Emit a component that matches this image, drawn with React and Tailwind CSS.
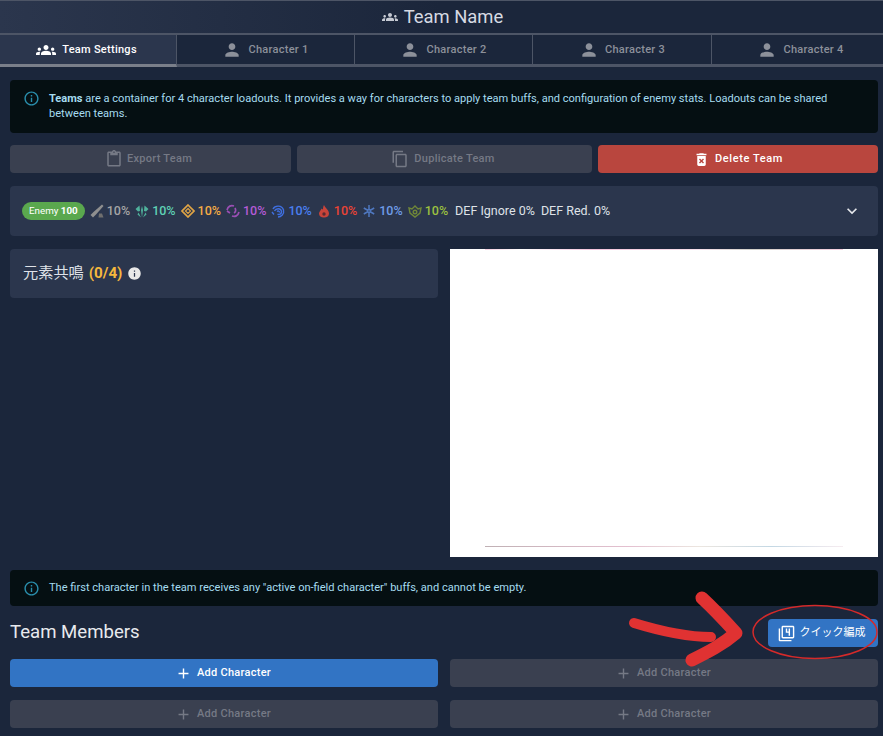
import React from "react";
import {
  MdGroups, MdPerson, MdOutlineContentPaste, MdOutlineContentCopy, MdDeleteForever,
  MdInfoOutline, MdInfo, MdAdd, MdKeyboardArrowDown, MdOutlineFilter4,
} from "react-icons/md";

const font = "font-['Roboto','Noto_Sans_CJK_JP',sans-serif]";

function Tab({ active, icon, label, border }) {
  return (
    <div className={`flex items-center justify-center gap-[6px] h-[34px] pt-px border-t-2 border-t-[#4d5566] border-b-[3px] text-[11px] font-medium tracking-[0.28px] ${border} ${active ? "text-white bg-[#2b364d] border-b-[#7a7f8a]" : "text-[#8c909a] border-b-[#4d5566]"}`}>
      {icon}
      <span>{label}</span>
    </div>
  );
}

function Alert({ children, className, textClass }) {
  return (
    <div className={`flex gap-[9px] rounded bg-[#050f12] pl-[13px] pr-[14px] text-[11.07px] leading-[15px] text-[#a6dcf0] ${className}`}>
      <MdInfoOutline className="shrink-0 text-[#2a8fad] text-[17px] mt-[10px]" />
      <div className={textClass}>{children}</div>
    </div>
  );
}

function DisabledButton({ className, icon, label }) {
  return (
    <div className={`flex items-center justify-center rounded bg-[#3a4050] text-[#757985] text-[11px] font-medium tracking-[0.28px] ${className}`}>
      {icon}
      <span>{label}</span>
    </div>
  );
}

const P = {
  physical: (
    <svg viewBox="0 0 14 14" className="w-[14px] h-[14px]"><path d="M12 0.5 L13.5 2 L6 10.5 L3 13.5 L0.5 11 L3.5 8 Z" fill="#8f8f8f" /><path d="M9 9.5h3l1.5 4H8.5z" fill="#6f6f6f" /></svg>
  ),
  anemo: (
    <svg viewBox="0 0 14 14" className="w-[14px] h-[14px]"><path d="M0.5 5 L4.5 1.5 L5 7 L3 7.5Z M13.5 5 L9.5 1.5 L9 7 L11 7.5Z M7 2 L8 6 L7 13.5 L6 6Z M3.5 8.5 L6 13.5 L2.5 10.5Z M10.5 8.5 L8 13.5 L11.5 10.5Z" fill="#4fb29c" /></svg>
  ),
  geo: (
    <svg viewBox="0 0 14 14" className="w-[14px] h-[14px]" fill="none" stroke="#e0a445" strokeWidth="1.7"><path d="M7 1 L13 7 L7 13 L1 7Z" /><path d="M7 4.5 L9.5 7 L7 9.5 L4.5 7Z" strokeWidth="1.2" /></svg>
  ),
  electro: (
    <svg viewBox="0 0 14 14" className="w-[14px] h-[14px]" fill="none" stroke="#9a4fb4" strokeWidth="1.7"><path d="M1 6 C2 2 5 1 8 2 M13 8 C12 12 9 13 6 12 M9 4 C10 6 10 8 8 9 M1 7 L4 9" /></svg>
  ),
  hydro: (
    <svg viewBox="0 0 14 14" className="w-[14px] h-[14px]" fill="none" stroke="#3f6fe0" strokeWidth="1.4"><path d="M2 5 C4 1 11 1 12.5 6 C13.5 10 10 13 7 13 M3.5 7 C5 4 10 4 10.5 7.5 C10.8 10 8 11 6.5 10 M6 7.5 C7 6.5 8.5 7 8.5 8.5 M1 8 L3 10.5" /></svg>
  ),
  pyro: (
    <svg viewBox="0 0 14 14" className="w-[14px] h-[14px]"><path d="M7 1 C8 4 12 6 12 9.5 C12 12 10 13.5 7 13.5 C4 13.5 2 12 2 9.5 C2 7.5 4 6.5 4.5 4.5 C5.5 5.5 6 5.5 6 5 C6 3.5 6.5 2 7 1Z" fill="#c8443a" /><circle cx="7" cy="10" r="1.7" fill="#5a2a30" /></svg>
  ),
  cryo: (
    <svg viewBox="0 0 14 14" className="w-[14px] h-[14px]" fill="none" stroke="#4f78c0" strokeWidth="1.5"><path d="M7 1V13M1.8 4L12.2 10M12.2 4L1.8 10" /><circle cx="7" cy="7" r="1.4" fill="#2b364d" /></svg>
  ),
  dendro: (
    <svg viewBox="0 0 14 14" className="w-[14px] h-[14px]" fill="none" stroke="#6f8638" strokeWidth="1.4"><path d="M1 4 L4 5 L7 2 L10 5 L13 4 L12 9 L7 13 L2 9Z" /><circle cx="7" cy="8" r="1.8" /></svg>
  ),
};

function Res({ icon, color }) {
  return (
    <span className="flex items-center gap-[3px]">
      {icon}
      <span className={`font-medium ${color}`}>10%</span>
    </span>
  );
}

export default function App() {
  return (
    <div className={`relative w-[883px] h-[736px] overflow-hidden bg-[#1b263b] text-white ${font}`}>
      {/* Title */}
      <div className="flex items-center justify-center gap-[6px] h-[33px] pb-[1px] pl-[2px] border-t border-t-[#4d5566] bg-[linear-gradient(90deg,#2b364d_0%,#1b263b_50%)] text-[18.4px] text-[#d6dae3]">
        <MdGroups className="text-[16px] text-[#c6cad3]" />
        <span>Team Name</span>
      </div>

      {/* Tabs */}
      <div className="grid grid-cols-[177px_178px_178px_179px_1fr]">
        <Tab active border="border-r border-r-[#4d5566] pr-[3px]" icon={<MdGroups className="text-[20px]" />} label="Team Settings" />
        <Tab border="border-r border-r-[#4d5566]" icon={<MdPerson className="text-[20px]" />} label="Character 1" />
        <Tab border="border-r border-r-[#4d5566]" icon={<MdPerson className="text-[20px]" />} label="Character 2" />
        <Tab border="border-r border-r-[#4d5566]" icon={<MdPerson className="text-[20px]" />} label="Character 3" />
        <Tab border="pl-[6px]" icon={<MdPerson className="text-[20px]" />} label="Character 4" />
      </div>

      {/* Body */}
      <div className="flex flex-col gap-[13px] pl-[10px] pr-[5px] pt-[13px]">
        <Alert className="h-[53px] -mb-px" textClass="pt-[11px]">
          <p><b className="font-bold">Teams</b> are a container for 4 character loadouts. It provides a way for characters to apply team buffs, and configuration of enemy stats. Loadouts can be shared between teams.</p>
        </Alert>

        <div className="flex gap-[6px] h-[28px]">
          <DisabledButton className="w-[281px] gap-[4px] pr-[4px]" icon={<MdOutlineContentPaste className="text-[18px]" />} label="Export Team" />
          <DisabledButton className="w-[295px] gap-[5px] pr-[3px]" icon={<MdOutlineContentCopy className="text-[18px]" />} label="Duplicate Team" />
          <div className="flex flex-1 items-center justify-center gap-[5px] rounded bg-[#b9463e] text-[11px] font-medium tracking-[0.6px]">
            <MdDeleteForever className="text-[17px]" />
            <span>Delete Team</span>
          </div>
        </div>

        <div className="flex items-center h-[50px] rounded bg-[#2b364d] px-[12px] text-[12.5px]">
          <div className="flex items-center gap-[5px]">
            <span className="flex items-center h-[18px] rounded-full bg-[#5aa84e] px-[7px] text-[9.8px]">Enemy&nbsp;<b className="font-bold">100</b></span>
            <Res icon={P.physical} color="text-[#a5a5a5]" />
            <Res icon={P.anemo} color="text-[#5fd1b5]" />
            <Res icon={P.geo} color="text-[#f4ab45]" />
            <Res icon={P.electro} color="text-[#b45bd6]" />
            <Res icon={P.hydro} color="text-[#4a7ff0]" />
            <Res icon={P.pyro} color="text-[#ea4335]" />
            <Res icon={P.cryo} color="text-[#6f9ce8]" />
            <Res icon={P.dendro} color="text-[#9bc040]" />
            <span className="ml-[2px] text-[#dfe2e8]">DEF Ignore 0%</span>
            <span className="ml-px text-[#dfe2e8]">DEF Red. 0%</span>
          </div>
          <MdKeyboardArrowDown className="ml-auto mr-[4px] text-[20px] text-[#e6e8ec]" />
        </div>

        <div className="grid grid-cols-2 gap-[12px] h-[308px]">
          <div className="flex items-center gap-[5px] self-start h-[49px] rounded bg-[#2b364d] px-[13px] text-[15.2px] text-[#dfe2e8]">
            <span>元素共鳴</span>
            <span className="font-bold text-[#f5b83d]">(0/4)</span>
            <MdInfo className="text-[15px] text-[#e8e8e8]" />
          </div>
          <div className="flex flex-col bg-white pb-[10px]">
            <div className="mx-[35px] h-px bg-[linear-gradient(90deg,#f6d0e0,#ffffff_10%,#f4c4dc_30%,#f6e0ea_60%,#d0d0c8_75%,#f6d0e0)]" />
            <div className="flex-1" />
            <div className="mx-[35px] h-px bg-[linear-gradient(90deg,#c0b0b4,#e4c0d0_40%,#ece6e0_60%,#c4d8e4_80%,#f6ecf0)]" />
          </div>
        </div>

        <Alert className="h-[36px]" textClass="pt-[10px]">
          <p>The first character in the team receives any "active on-field character" buffs, and cannot be empty.</p>
        </Alert>

        <div className="flex items-center justify-between h-[28px]">
          <span className="text-[18.6px] text-[#e8eaee]">Team Members</span>
          <div className="flex items-center justify-center gap-[5px] w-[110px] h-[28px] pr-[3px] rounded-sm bg-[#3274c4] text-[11px]">
            <MdOutlineFilter4 className="text-[17px]" />
            <span>クイック編成</span>
          </div>
        </div>

        <div className="grid grid-cols-2 gap-x-[12px] gap-y-[13px] -mt-px">
          <div className="flex items-center justify-center gap-[5px] h-[28px] pr-[2px] rounded-sm bg-[#3274c4] text-[11px] font-medium tracking-[0.28px]">
            <MdAdd className="text-[17px]" />
            <span>Add Character</span>
          </div>
          <DisabledButton className="h-[28px] gap-[5px] pr-[2px]" icon={<MdAdd className="text-[17px]" />} label="Add Character" />
          <DisabledButton className="h-[28px] gap-[5px] pr-[2px]" icon={<MdAdd className="text-[17px]" />} label="Add Character" />
          <DisabledButton className="h-[28px] gap-[5px] pr-[2px]" icon={<MdAdd className="text-[17px]" />} label="Add Character" />
        </div>
      </div>

      {/* Hand-drawn annotation on top of the screenshot */}
      <svg className="absolute left-0 top-0 pointer-events-none" width="883" height="736" viewBox="0 0 883 736" fill="none">
        <path d="M634 623 C660 631 685 637 711 637" stroke="#e03232" strokeWidth="10" strokeLinecap="round" />
        <path d="M702 598 C715 610 726 622 736 633 C722 645 708 652 692 660" stroke="#e03232" strokeWidth="13" strokeLinecap="round" strokeLinejoin="round" />
        <ellipse cx="815" cy="632" rx="62" ry="26.5" stroke="#d42a2a" strokeWidth="1.5" />
      </svg>
    </div>
  );
}
